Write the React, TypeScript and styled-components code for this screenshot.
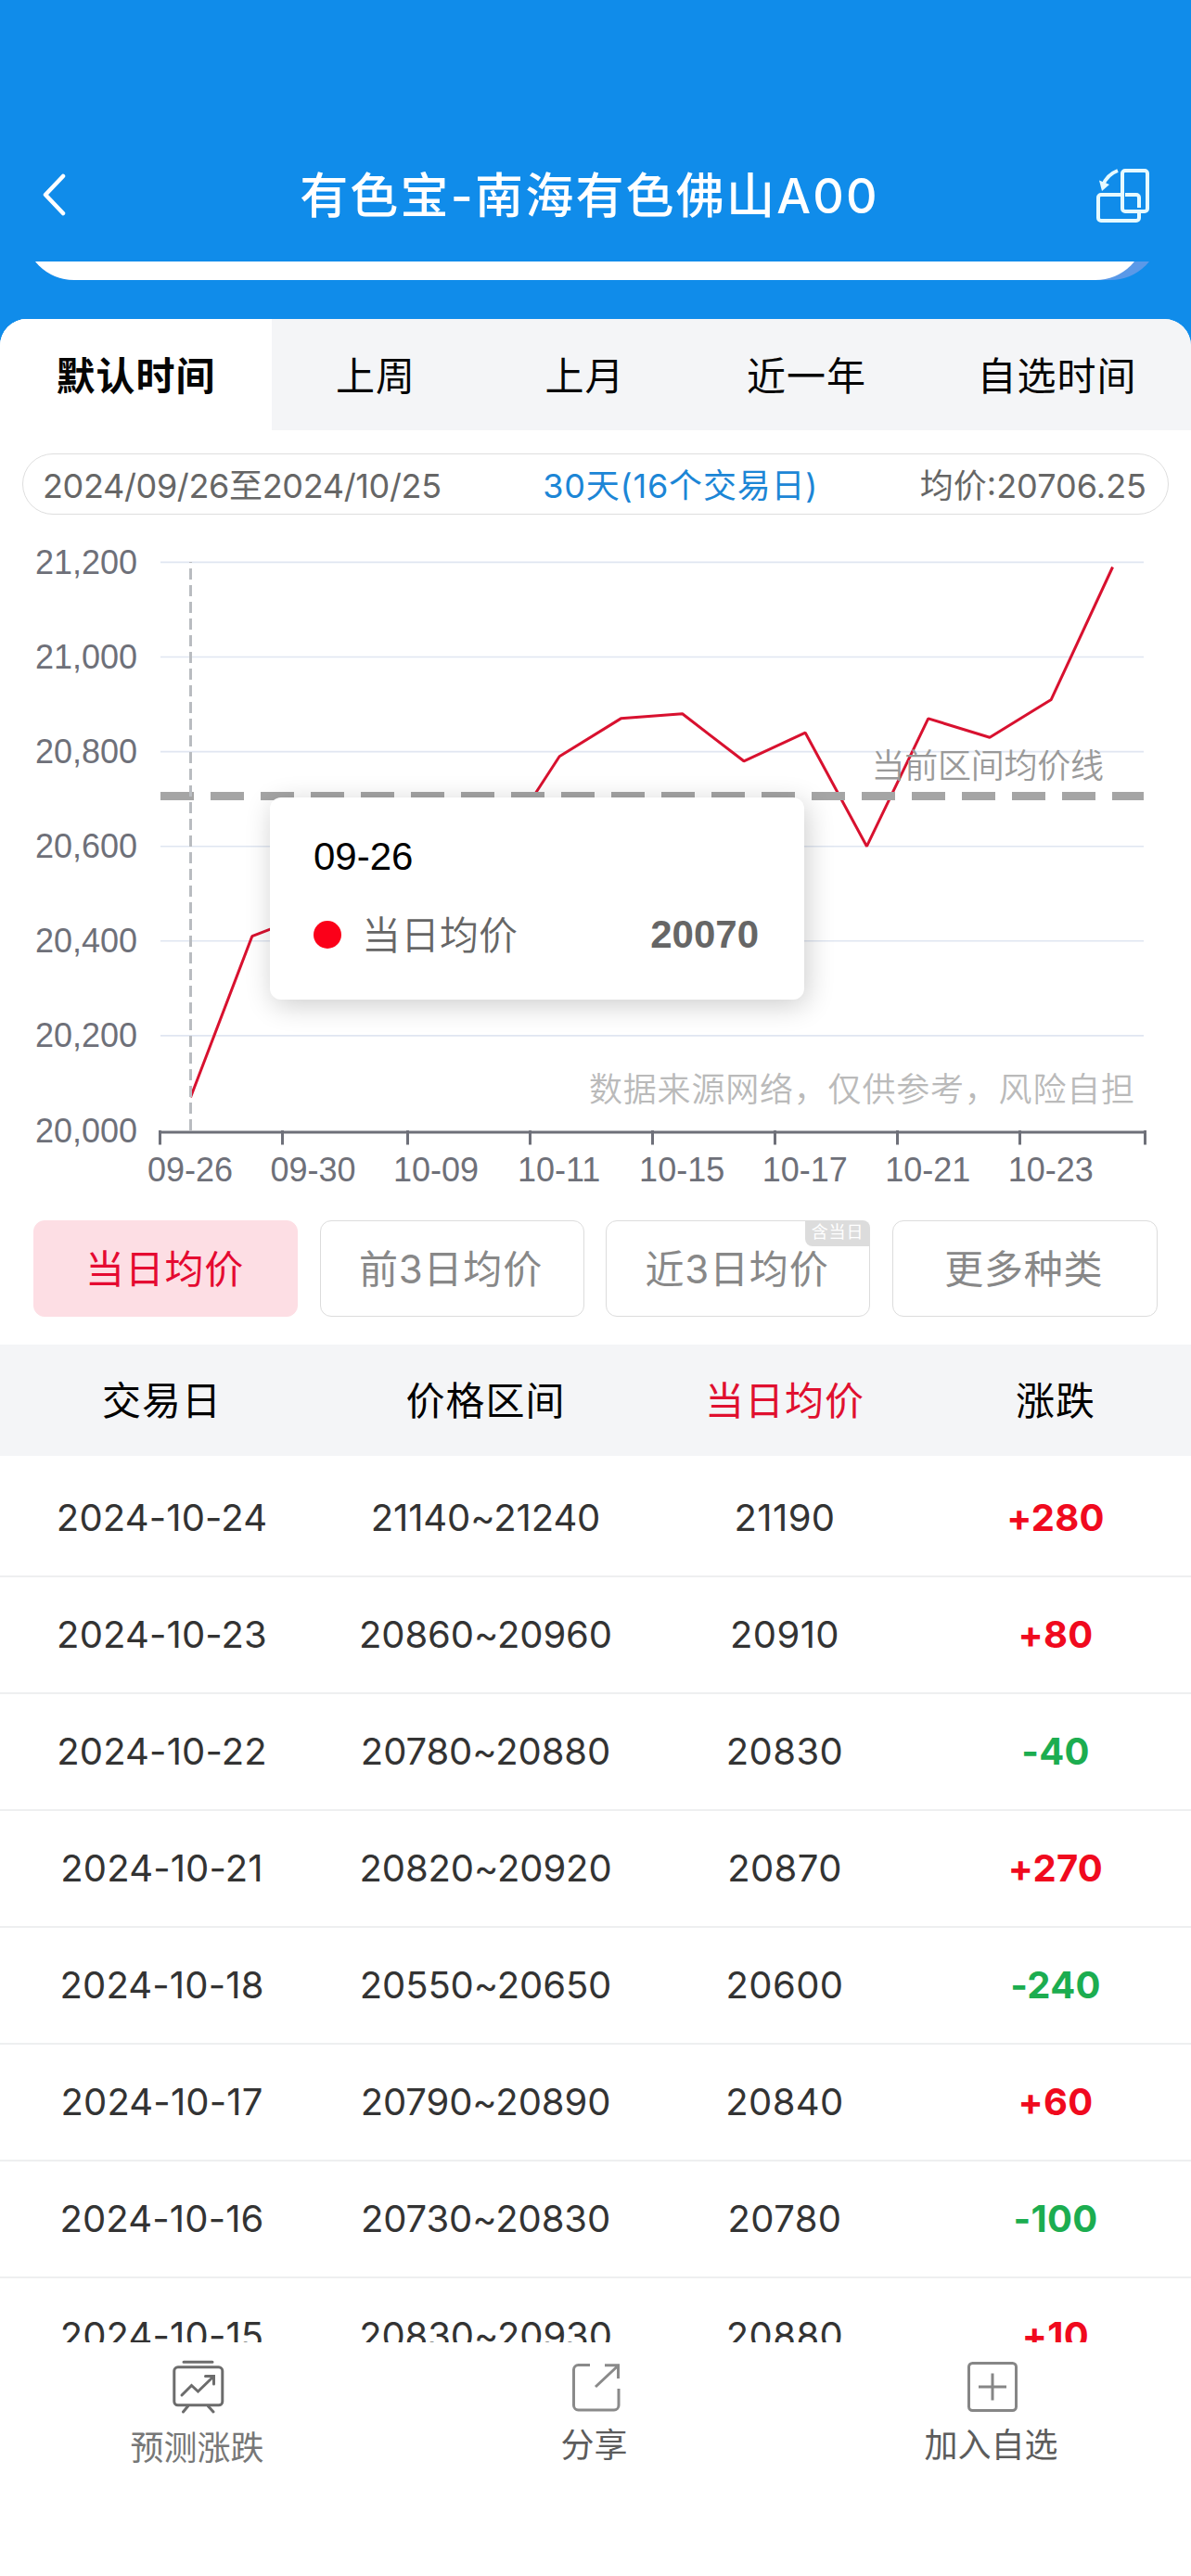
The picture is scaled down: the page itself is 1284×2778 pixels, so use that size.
import React from 'react';
import styled, { createGlobalStyle } from 'styled-components';

const UI_FONT = "Inter, 'Noto Sans CJK SC', sans-serif";
const CHART_FONT = "'Liberation Sans', 'Noto Sans CJK SC', sans-serif";

const GlobalStyle = createGlobalStyle`
  * { box-sizing: border-box; }
  html, body { margin: 0; padding: 0; background: #fff; }
  body { font-family: ${UI_FONT}; }
  button { font: inherit; letter-spacing: inherit; background: none; border: 0; padding: 0; margin: 0; color: inherit; }
`;

const Page = styled.div`
  width: 1284px;
  height: 2778px;
  display: flex;
  flex-direction: column;
  overflow: hidden;
  background: #fff;
`;

const TopBar = styled.header`
  flex: none;
  height: 282px;
  padding: 140px 43px 0 43px;
  display: grid;
  grid-template-columns: 60px 1fr 60px;
  align-items: center;
  background: #108cea;
  color: #fff;
`;

const TopIcon = styled.button<{ $end?: boolean }>`
  display: flex;
  justify-content: ${(p) => (p.$end ? 'flex-end' : 'flex-start')};
`;

const Title = styled.h1`
  margin: 0;
  padding: 2px 13px 0 0;
  font-size: 52px;
  font-weight: 500;
  line-height: 72px;
  letter-spacing: 2.2px;
  text-align: center;
  white-space: nowrap;
`;

const Content = styled.main`
  flex: 1;
  min-height: 0;
  overflow: hidden;
  background: linear-gradient(#108cea 0 120px, #fff 120px);
`;

const BannerEdge = styled.div`
  height: 20px;
  margin: 0 33px 42px 26px;
  display: flex;
  align-items: flex-end;
  overflow: hidden;
`;

const BannerBack = styled.div`
  width: 1225px;
  height: 110px;
  padding-right: 16px;
  border-radius: 54px;
  background: #5a99e8;
`;

const BannerFront = styled.div`
  height: 110px;
  border-radius: 54px;
  background: #fff;
`;

const Card = styled.section`
  background: #fff;
  border-radius: 29px 29px 0 0;
  overflow: hidden;
`;

const Tabs = styled.nav`
  height: 120px;
  display: grid;
  grid-template-columns: 293px 224px 227px 251px 1fr;
  background: #f4f5f7;
`;

const Tab = styled.button<{ $active?: boolean }>`
  padding-bottom: 4px;
  font-size: 42px;
  letter-spacing: 1px;
  font-weight: ${(p) => (p.$active ? 700 : 400)};
  background: ${(p) => (p.$active ? '#fff' : 'transparent')};
  color: #050505;
`;

const Summary = styled.div`
  height: 66px;
  margin: 25px 24px 0;
  padding: 0 23px 3px 21px;
  display: flex;
  justify-content: space-between;
  align-items: center;
  border: 1.5px solid #dedede;
  border-radius: 33px;
  font-size: 36px;
  color: #666;
  white-space: nowrap;
`;

const SummaryRange = styled.span`
  letter-spacing: -0.35px;
`;

const SummaryDays = styled.span`
  letter-spacing: 0.8px;
  color: #1c86d6;
`;

const ChartBox = styled.div`
  position: relative;
  height: 761px;
`;

const ChartSvg = styled.svg`
  display: block;
  font-family: ${CHART_FONT};
`;

const Tooltip = styled.div`
  position: absolute;
  left: 291px;
  top: 305px;
  width: 576px;
  height: 218px;
  padding: 40px 49px 0 47px;
  border-radius: 12px;
  background: #fff;
  box-shadow: 3px 6px 30px rgba(0, 0, 0, 0.2);
  font-family: ${CHART_FONT};
  font-size: 42px;
  color: #666;
`;

const TooltipTitle = styled.div`
  line-height: 48px;
  color: #000;
`;

const TooltipRow = styled.div`
  margin-top: 30px;
  height: 60px;
  display: flex;
  align-items: center;
`;

const Dot = styled.span`
  width: 30px;
  height: 30px;
  margin-right: 22px;
  border-radius: 50%;
  background: #fb0019;
`;

const TooltipName = styled.span`
  padding-bottom: 6px;
  font-weight: 350;
`;

const TooltipValue = styled.b`
  margin-left: auto;
`;

const Filters = styled.div`
  margin-bottom: 30px;
  padding: 0 36px;
  display: grid;
  grid-template-columns: repeat(3, 285px) 1fr;
  gap: 23.5px;
`;

const Filter = styled.button<{ $active?: boolean }>`
  position: relative;
  height: 104px;
  padding: 0 2px 5px 0;
  border-radius: 12px;
  border: 1.5px solid ${(p) => (p.$active ? '#fddee4' : '#dcdcdc')};
  background: ${(p) => (p.$active ? '#fddee4' : '#fff')};
  color: ${(p) => (p.$active ? '#e50a31' : '#888')};
  font-size: 42px;
  letter-spacing: 0.8px;
  white-space: nowrap;
`;

const Badge = styled.span`
  position: absolute;
  right: -1px;
  top: -1px;
  width: 70px;
  height: 28px;
  border-radius: 0 8px 0 8px;
  background: #dcdcdc;
  color: #fff;
  font-size: 18px;
  line-height: 26px;
  text-align: center;
`;

const Row = styled.div`
  height: 126px;
  padding-bottom: 1px;
  display: grid;
  grid-template-columns: 349px 349px 296px 288px;
  align-items: center;
  justify-items: center;
  border-bottom: 2px solid #eeeff0;
  font-size: 40px;
  color: #333;
`;

const HeadRow = styled(Row)`
  height: 120px;
  margin-bottom: 5px;
  padding-bottom: 5px;
  border-bottom: 0;
  background: #f4f5f7;
  font-size: 42px;
  letter-spacing: 1px;
  color: #000;
`;

const HeadCell = styled.span<{ $active?: boolean }>`
  color: ${(p) => (p.$active ? '#e0102f' : 'inherit')};
`;

const Cell = styled.span<{ $tracking: number }>`
  letter-spacing: ${(p) => p.$tracking}px;
`;

const Delta = styled.b<{ $up: boolean }>`
  letter-spacing: 0.3px;
  color: ${(p) => (p.$up ? '#f00a1e' : '#1cad50')};
`;

const BottomBar = styled.footer`
  flex: none;
  height: 252px;
  display: grid;
  grid-template-columns: repeat(3, 1fr);
  align-items: start;
  background: #fff;
`;

const Action = styled.button<{ $soft?: boolean }>`
  padding-top: 17px;
  display: flex;
  flex-direction: column;
  align-items: center;
  gap: ${(p) => (p.$soft ? 11 : 8)}px;
  font-size: 36px;
  line-height: 52px;
  color: ${(p) => (p.$soft ? '#777' : '#5c5c5c')};
`;

const ActionLabel = styled.span`
  padding-right: 3px;
`;

const PRICES = [
  20070, 20410, 20460, 20620, 20590, 20590, 20790, 20870, 20880, 20780, 20840, 20600, 20870, 20830, 20910, 21190,
];
const AVERAGE = 20706.25;
const LEVELS = [21200, 21000, 20800, 20600, 20400, 20200, 20000];
const DATES = ['09-26', '09-30', '10-09', '10-11', '10-15', '10-17', '10-21', '10-23'];
const TICKS = [172.5, 304.5, 439.5, 571.5, 703.5, 835.5, 967.5, 1099.5, 1234.5];

const px = (i: number) => 205.5 + i * 66.27;
const py = (v: number) => 664 - ((v - 20000) * 102.1) / 200;

function PriceChart() {
  return (
    <ChartSvg width="1284" height="761" viewBox="0 0 1284 761">
      {LEVELS.slice(0, -1).map((v) => (
        <line key={v} x1="173" x2="1233" y1={py(v)} y2={py(v)} stroke="#e0e6f1" strokeWidth="1.6" />
      ))}
      {LEVELS.map((v) => (
        <text key={v} x="148" y={py(v) + 12.5} textAnchor="end" fontSize="36" fill="#6e7079">
          {v.toLocaleString('en-US')}
        </text>
      ))}
      <polyline
        points={PRICES.map((v, i) => `${px(i)},${py(v)}`).join(' ')}
        fill="none"
        stroke="#d8112f"
        strokeWidth="3"
        strokeLinejoin="bevel"
      />
      <line x1="173" x2="1233" y1={py(AVERAGE)} y2={py(AVERAGE)} stroke="#a5a5a5" strokeWidth="9" strokeDasharray="36 18" />
      <text x="939.5" y="284" fontSize="36" fontWeight="350" fill="#999" textLength="250.500">
        当前区间均价线
      </text>
      <text x="635" y="633" fontSize="36" fontWeight="350" fill="#bababa" textLength="588">
        数据来源网络，仅供参考，风险自担
      </text>
      <line x1="205.5" x2="205.5" y1="664" y2="51" stroke="#b9bcc0" strokeWidth="3" strokeDasharray="12 6" />
      <path d="M171 666H1236" stroke="#6e7079" strokeWidth="3" />
      {TICKS.map((x) => (
        <line key={x} x1={x} x2={x} y1="664" y2="679.5" stroke="#6e7079" strokeWidth="3" />
      ))}
      {DATES.map((d, i) => (
        <text key={d} x={px(i * 2) - 0.5} y="719" textAnchor="middle" fontSize="36" fill="#6e7079">
          {d}
        </text>
      ))}
    </ChartSvg>
  );
}

const ROWS: [string, string, string, string][] = [
  ['2024-10-24', '21140~21240', '21190', '+280'],
  ['2024-10-23', '20860~20960', '20910', '+80'],
  ['2024-10-22', '20780~20880', '20830', '-40'],
  ['2024-10-21', '20820~20920', '20870', '+270'],
  ['2024-10-18', '20550~20650', '20600', '-240'],
  ['2024-10-17', '20790~20890', '20840', '+60'],
  ['2024-10-16', '20730~20830', '20780', '-100'],
  ['2024-10-15', '20830~20930', '20880', '+10'],
];

const BackIcon = () => (
  <svg width="30" height="48" viewBox="0 0 30 48" fill="none" stroke="#fff" strokeWidth="4.5" strokeLinecap="round" strokeLinejoin="round">
    <path d="M25 3 6 23 25 43" />
  </svg>
);

const RotateIcon = () => (
  <svg width="60" height="60" viewBox="0 0 60 60" fill="none" stroke="#e6faff" strokeWidth="4">
    <rect x="29" y="3" width="27" height="44" rx="3" />
    <path d="M28 29H6a3 3 0 0 0-3 3v22a3 3 0 0 0 3 3h38a3 3 0 0 0 3-3V48M32 29h12a3 3 0 0 1 3 3v11" />
    <path d="M24 3C16 6 11 11 8 19" />
    <path d="M4 13.500 15 18 7 25Z" fill="#e6faff" stroke="none" />
  </svg>
);

const ForecastIcon = () => (
  <svg width="60" height="60" viewBox="0 0 60 60" fill="none" stroke="#6c6c6c" strokeWidth="3" strokeLinecap="round">
    <path d="M14 4.300H45M18.500 52 13.500 58M40.500 52 46 58" />
    <rect x="3.800" y="9.800" width="52" height="41" rx="4" />
    <path d="M12 40 22.500 29.500 29.500 36 46 20M37.500 19.500H46.500V28" />
  </svg>
);

const ShareIcon = () => (
  <svg width="60" height="60" viewBox="0 0 60 60" fill="none" stroke="#8a8a8a" strokeWidth="3">
    <path d="M24 7.500H11.500a5 5 0 0 0-5 5V51a5 5 0 0 0 5 5H50a5 5 0 0 0 5-5V33M30 31 54 8.500M40 7.800H54.500V22" />
  </svg>
);

const AddIcon = () => (
  <svg width="60" height="60" viewBox="0 0 60 60" fill="none" stroke="#868686" strokeWidth="3">
    <rect x="4.500" y="5.500" width="51" height="51" rx="4" />
    <path d="M15 31H45M30 16.500V45.500" />
  </svg>
);

export default function App() {
  return (
    <Page>
      <GlobalStyle />
      <TopBar>
        <TopIcon>
          <BackIcon />
        </TopIcon>
        <Title>有色宝-南海有色佛山A00</Title>
        <TopIcon $end>
          <RotateIcon />
        </TopIcon>
      </TopBar>
      <Content>
        <BannerEdge>
          <BannerBack>
            <BannerFront />
          </BannerBack>
        </BannerEdge>
        <Card>
          <Tabs>
            <Tab $active>默认时间</Tab>
            <Tab>上周</Tab>
            <Tab>上月</Tab>
            <Tab>近一年</Tab>
            <Tab>自选时间</Tab>
          </Tabs>
          <Summary>
            <SummaryRange>2024/09/26至2024/10/25</SummaryRange>
            <SummaryDays>30天(16个交易日)</SummaryDays>
            <span>均价:20706.25</span>
          </Summary>
          <ChartBox>
            <PriceChart />
            <Tooltip>
              <TooltipTitle>09-26</TooltipTitle>
              <TooltipRow>
                <Dot />
                <TooltipName>当日均价</TooltipName>
                <TooltipValue>20070</TooltipValue>
              </TooltipRow>
            </Tooltip>
          </ChartBox>
          <Filters>
            <Filter $active>当日均价</Filter>
            <Filter>前3日均价</Filter>
            <Filter>
              近3日均价
              <Badge>含当日</Badge>
            </Filter>
            <Filter>更多种类</Filter>
          </Filters>
          <HeadRow>
            <HeadCell>交易日</HeadCell>
            <HeadCell>价格区间</HeadCell>
            <HeadCell $active>当日均价</HeadCell>
            <HeadCell>涨跌</HeadCell>
          </HeadRow>
          {ROWS.map(([date, range, price, delta]) => (
            <Row key={date}>
              <Cell $tracking={0.15}>{date}</Cell>
              <Cell $tracking={-0.1}>{range}</Cell>
              <Cell $tracking={0.4}>{price}</Cell>
              <Delta $up={delta.startsWith('+')}>{delta}</Delta>
            </Row>
          ))}
        </Card>
      </Content>
      <BottomBar>
        <Action $soft>
          <ForecastIcon />
          <ActionLabel>预测涨跌</ActionLabel>
        </Action>
        <Action>
          <ShareIcon />
          <ActionLabel>分享</ActionLabel>
        </Action>
        <Action>
          <AddIcon />
          <ActionLabel>加入自选</ActionLabel>
        </Action>
      </BottomBar>
    </Page>
  );
}
